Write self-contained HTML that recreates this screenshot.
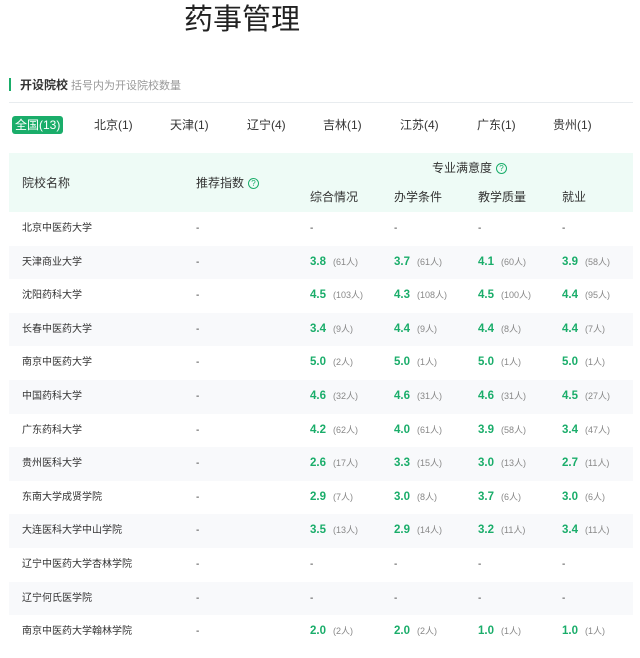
<!DOCTYPE html>
<html><head><meta charset="utf-8"><style>
*{margin:0;padding:0;box-sizing:border-box}
body{width:640px;height:658px;background:#fff;font-family:"Liberation Sans","Noto Sans CJK SC",sans-serif;color:#333;position:relative;overflow:hidden}
.a{position:absolute;white-space:nowrap}
.title{left:184px;top:2px;font-size:29px;color:#222;line-height:36px}
.bar{left:9px;top:78px;width:2px;height:13px;background:#1aad6a}
.h2{left:20px;top:77px;font-size:12px;font-weight:bold;color:#333;line-height:16px}
.h2 span{font-weight:normal;color:#999;font-size:11px;margin-left:3px}
.line{left:9px;top:102px;width:624px;height:1px;background:#e8ecef}
.tab{top:118px;font-size:12px;color:#333;line-height:14px}
.tab.on{background:#1aad6a;color:#fff;border-radius:3px;padding:2px 3px;top:116px}
.head{left:9px;top:153px;width:624px;height:59px;background:#eefbf6}
.hd{font-size:12px;color:#333;line-height:14px}
.q{display:inline-block;width:11px;height:11px;border:1px solid #1aad6a;border-radius:50%;color:#1aad6a;font-size:8px;line-height:9px;text-align:center;vertical-align:1px;margin-left:4px}
.row{position:absolute;left:9px;width:624px;height:33.6px;font-size:10px;color:#333}
.row.g{background:#f8f9fb}
.row div{position:absolute;top:11px;line-height:12px;white-space:nowrap}
.v{font-weight:bold;color:#1aad6a;font-size:11.5px}
.c{color:#888;font-size:9px;margin-left:7px;font-weight:normal}
</style></head><body>
<div class="a title">药事管理</div>
<div class="a bar"></div>
<div class="a h2">开设院校<span>括号内为开设院校数量</span></div>
<div class="a line"></div>
<div class="a tab on" style="left:12px">全国(13)</div>
<div class="a tab" style="left:94px">北京(1)</div>
<div class="a tab" style="left:170px">天津(1)</div>
<div class="a tab" style="left:247px">辽宁(4)</div>
<div class="a tab" style="left:323px">吉林(1)</div>
<div class="a tab" style="left:400px">江苏(4)</div>
<div class="a tab" style="left:477px">广东(1)</div>
<div class="a tab" style="left:553px">贵州(1)</div>
<div class="a head"></div>
<div class="a hd" style="left:22px;top:176px">院校名称</div>
<div class="a hd" style="left:196px;top:176px">推荐指数<span class="q">?</span></div>
<div class="a hd" style="left:432px;top:161px">专业满意度<span class="q">?</span></div>
<div class="a hd" style="left:310px;top:190px">综合情况</div>
<div class="a hd" style="left:394px;top:190px">办学条件</div>
<div class="a hd" style="left:478px;top:190px">教学质量</div>
<div class="a hd" style="left:562px;top:190px">就业</div>
<div id="rows"></div>
<script>
var d=[["北京中医药大学"],["天津商业大学",3.8,61,3.7,61,4.1,60,3.9,58],["沈阳药科大学",4.5,103,4.3,108,4.5,100,4.4,95],["长春中医药大学",3.4,9,4.4,9,4.4,8,4.4,7],["南京中医药大学","5.0",2,"5.0",1,"5.0",1,"5.0",1],["中国药科大学",4.6,32,4.6,31,4.6,31,4.5,27],["广东药科大学",4.2,62,"4.0",61,3.9,58,3.4,47],["贵州医科大学",2.6,17,3.3,15,"3.0",13,2.7,11],["东南大学成贤学院",2.9,7,"3.0",8,3.7,6,"3.0",6],["大连医科大学中山学院",3.5,13,2.9,14,3.2,11,3.4,11],["辽宁中医药大学杏林学院"],["辽宁何氏医学院"],["南京中医药大学翰林学院","2.0",2,"2.0",2,"1.0",1,"1.0",1]];
var h="",xs=[301,385,469,553];
d.forEach(function(r,i){h+='<div class="row'+(i%2?' g':'')+'" style="top:'+(212+i*33.6)+'px"><div style="left:13px">'+r[0]+'</div><div style="left:187px">-</div>';
for(var k=0;k<4;k++){h+='<div style="left:'+xs[k]+'px;'+(r.length>1?'top:10px':'')+'">'+(r.length>1?'<span class="v">'+r[1+2*k]+'</span><span class="c">('+r[2+2*k]+'人)</span>':'-')+'</div>';}
h+='</div>';});
document.getElementById("rows").innerHTML=h;
</script>
</body></html>
